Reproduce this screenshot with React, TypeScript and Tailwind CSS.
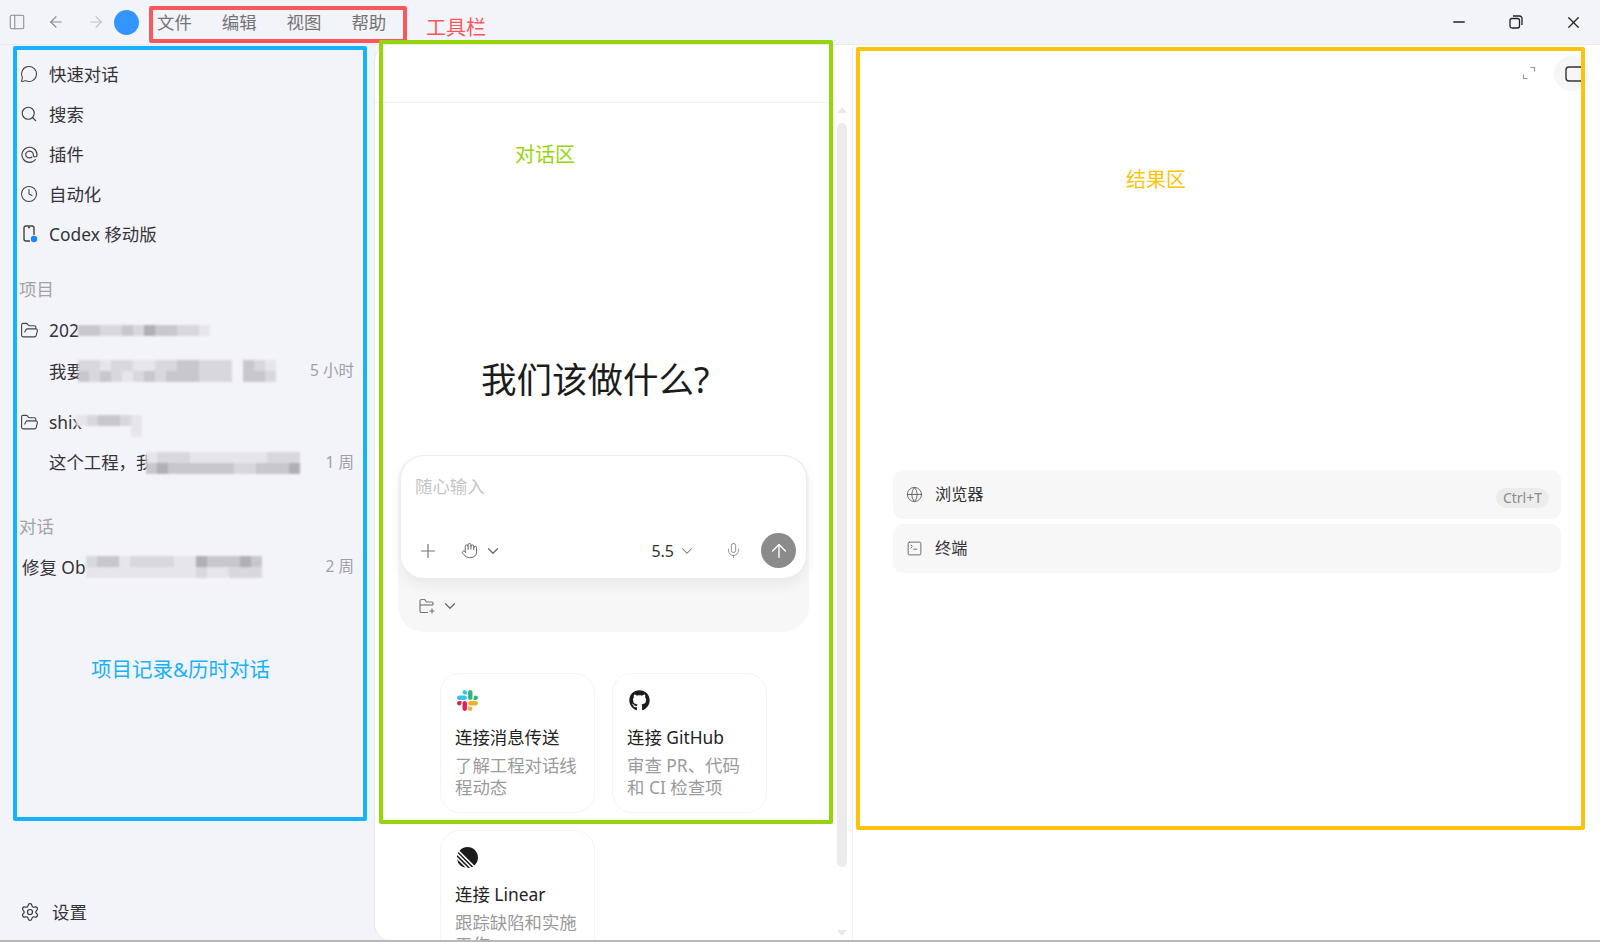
import { ReactNode } from "react";
import {
  ArrowLeft,
  ArrowRight,
  ArrowUp,
  ChevronDown,
  Clock,
  FolderOpen,
  Globe,
  Hand,
  MessageCircle,
  Mic,
  Minus,
  PanelLeft,
  Plus,
  Search,
  Settings,
  SquareTerminal,
  X,
} from "lucide-react";
import { FaGithub } from "react-icons/fa";
import { SiLinear } from "react-icons/si";

const tones = ["bg-transparent", "bg-[#e6e6ea]", "bg-[#d8d8dc]", "bg-[#c8c8cc]", "bg-[#b0b0b4]"];

// pixelated patch hiding a private title, one string per row of cells
function Blur({ rows, className }: { rows: string[]; className?: string }) {
  return (
    <div className={`flex flex-col blur-[1px] shrink-0 ${className ?? ""}`}>
      {rows.map((row, i) => (
        <div key={i} className="flex">
          {row.split("").map((c, j) => (
            <div key={j} className={`w-[11px] h-[11px] ${tones[Number(c)]}`} />
          ))}
        </div>
      ))}
    </div>
  );
}

function NavRow({ icon, label }: { icon: ReactNode; label: string }) {
  return (
    <div className="flex items-center h-[40px] pl-[19px] text-[#333338]">
      <div className="w-[20px] flex justify-center">{icon}</div>
      <span className="ml-[10px]">{label}</span>
    </div>
  );
}

function PhoneDot() {
  return (
    <svg width="20" height="20" viewBox="0 0 20 20" fill="none" stroke="#444" strokeWidth="1.4">
      <path d="M11 17H7a2 2 0 0 1-2-2V4a2 2 0 0 1 2-2h6a2 2 0 0 1 2 2v7" />
      <path d="M9 3.5h2" />
      <circle cx="15" cy="15" r="3.2" fill="#1a85ff" stroke="none" />
    </svg>
  );
}

function AtIcon() {
  return (
    <svg width="17" height="17" viewBox="0 0 18 18" fill="none" stroke="#444" strokeWidth="1.2">
      <path d="M15.5 14A8 8 0 1 1 17 9c0 1.6-.9 2.6-2 2.6S13 10.6 13 9a4 3.6 0 1 0-1 2.4" />
    </svg>
  );
}

function FolderAdd() {
  return (
    <svg width="18" height="18" viewBox="0 0 18 18" fill="none" stroke="#777" strokeWidth="1.2">
      <path d="M10 15.5H3.5A1.5 1.5 0 0 1 2 14V4a1.5 1.5 0 0 1 1.5-1.5h3.2L8.5 5h5A1.5 1.5 0 0 1 15 6.5v1.5" />
      <path d="M2 8h13" />
      <path d="M14 11.5v5M11.5 14h5" />
    </svg>
  );
}

function SlackLogo() {
  return (
    <svg width="21" height="21" viewBox="0 0 122.8 122.8" className="ml-[2px]">
      <path d="M25.8 77.6c0 7.1-5.8 12.9-12.9 12.9S0 84.7 0 77.6s5.8-12.9 12.9-12.9h12.9v12.9zm6.5 0c0-7.1 5.8-12.9 12.9-12.9s12.9 5.8 12.9 12.9v32.3c0 7.1-5.8 12.9-12.9 12.9s-12.9-5.8-12.9-12.9V77.6z" fill="#e01e5a" />
      <path d="M45.2 25.8c-7.1 0-12.9-5.8-12.9-12.9S38.1 0 45.2 0s12.9 5.8 12.9 12.9v12.9H45.2zm0 6.5c7.1 0 12.9 5.8 12.9 12.9s-5.8 12.9-12.9 12.9H12.9C5.8 58.1 0 52.3 0 45.2s5.8-12.9 12.9-12.9h32.3z" fill="#36c5f0" />
      <path d="M97 45.2c0-7.1 5.8-12.9 12.9-12.9s12.9 5.8 12.9 12.9-5.8 12.9-12.9 12.9H97V45.2zm-6.5 0c0 7.1-5.8 12.9-12.9 12.9s-12.9-5.8-12.9-12.9V12.9C64.7 5.8 70.5 0 77.6 0s12.9 5.8 12.9 12.9v32.3z" fill="#2eb67d" />
      <path d="M77.6 97c7.1 0 12.9 5.8 12.9 12.9s-5.8 12.9-12.9 12.9-12.9-5.8-12.9-12.9V97h12.9zm0-6.5c-7.1 0-12.9-5.8-12.9-12.9s5.8-12.9 12.9-12.9h32.3c7.1 0 12.9 5.8 12.9 12.9s-5.8 12.9-12.9 12.9H77.6z" fill="#ecb22e" />
    </svg>
  );
}

function ConnectCard({ icon, title, lines }: { icon: ReactNode; title: string; lines: string[] }) {
  return (
    <div className="w-[155px] h-[140px] rounded-[20px] border border-[#f4f4f4] pl-[14px] pt-[16px] shrink-0">
      <div className="h-[21px] flex">{icon}</div>
      <div className="mt-[15px] leading-[22px] text-[#222]">{title}</div>
      <div className="mt-[6px] leading-[22px] text-[#9b9b9b]">
        {lines.map((l) => (
          <div key={l}>{l}</div>
        ))}
      </div>
    </div>
  );
}

export default function App() {
  return (
    <div className="relative w-[1600px] h-[942px] overflow-hidden flex flex-col bg-[#f3f4f9] text-[17.4px] font-['Noto_Sans','Noto_Sans_CJK_SC',sans-serif]">
      {/* title bar */}
      <div className="h-[45px] flex items-center shrink-0 border-b border-[#e9e9ee]">
        <PanelLeft size={18} strokeWidth={1.4} color="#8a8a8e" className="ml-[8px]" />
        <ArrowLeft size={18} strokeWidth={1.5} color="#8c8c90" className="ml-[21px]" />
        <ArrowRight size={18} strokeWidth={1.5} color="#c4c4c8" className="ml-[22px]" />
        <div className="w-[25px] h-[25px] rounded-full bg-[#3395ff] ml-[9px]" />
        <div className="flex gap-[30px] ml-[18px] text-[#737376]">
          <span>文件</span>
          <span>编辑</span>
          <span>视图</span>
          <span>帮助</span>
        </div>
        <div className="ml-auto flex items-center">
          <Minus size={18} strokeWidth={1.8} color="#222" className="mr-[1px]" />
          <svg width="14" height="14" viewBox="0 0 14 14" fill="none" stroke="#222" strokeWidth="1.3" className="ml-[40px]">
            <rect x="1" y="3.5" width="9.5" height="9.5" rx="2" />
            <path d="M4 1h6.5A2.5 2.5 0 0 1 13 3.5V10" />
          </svg>
          <X size={19} strokeWidth={1.5} color="#222" className="ml-[41px] mr-[17px]" />
        </div>
      </div>

      <div className="flex flex-1 min-h-0">
        {/* sidebar */}
        <div className="w-[374px] shrink-0 flex flex-col pt-[9px] pb-[8px]">
          <NavRow icon={<MessageCircle size={18} strokeWidth={1.4} color="#444" />} label="快速对话" />
          <NavRow icon={<Search size={18} strokeWidth={1.5} color="#444" />} label="搜索" />
          <NavRow icon={<AtIcon />} label="插件" />
          <NavRow icon={<Clock size={18} strokeWidth={1.4} color="#444" />} label="自动化" />
          <NavRow icon={<PhoneDot />} label="Codex 移动版" />

          <div className="mt-[23px] h-[24px] leading-[24px] pl-[19px] text-[#a3a3a6]">项目</div>

          <div className="mt-[9px] h-[40px] flex items-center pl-[20px] text-[#333338]">
            <FolderOpen size={19} strokeWidth={1.4} color="#444" />
            <span className="ml-[10px]">202</span>
            <Blur rows={["332232433221"]} className="ml-[-1px]" />
          </div>
          <div className="mt-[1px] h-[40px] flex items-center pl-[49px] text-[#333338]">
            <span>我要</span>
            <Blur rows={["2212211223322203210", "3232123233322203320"]} className="ml-[-6px]" />
            <span className="ml-auto mr-[20px] text-[15.5px] text-[#a0a0a3]">5 小时</span>
          </div>
          <div className="mt-[11px] h-[40px] flex items-center pl-[20px] text-[#333338]">
            <FolderOpen size={19} strokeWidth={1.4} color="#444" />
            <span className="ml-[10px]">shix</span>
            <Blur rows={["123321", "000001"]} className="ml-[-6px] mt-[8px]" />
          </div>
          <div className="h-[40px] flex items-center pl-[49px] text-[#333338]">
            <span className="mt-[1px]">{"这个工程\uFF0C我"}</span>
            <Blur rows={["12221111111222", "34333333223334"]} className="ml-[-7px] mt-[1px]" />
            <span className="ml-auto mr-[20px] mt-[1px] text-[15.5px] text-[#a0a0a3]">1 周</span>
          </div>

          <div className="mt-[32px] h-[24px] leading-[24px] pl-[19px] text-[#a3a3a6]">对话</div>

          <div className="mt-[9px] h-[40px] flex items-center pl-[22px] text-[#333338]">
            <span>修复 Ob</span>
            <Blur rows={["2331222211433343", "1111111111211222"]} className="ml-0" />
            <span className="ml-auto mr-[20px] text-[15.5px] text-[#a0a0a3]">2 周</span>
          </div>

          <div className="mt-auto h-[40px] flex items-center pl-[20px] text-[#333338]">
            <Settings size={20} strokeWidth={1.4} color="#333" />
            <span className="ml-[12px]">设置</span>
          </div>
        </div>

        {/* conversation */}
        <div className="w-[478px] shrink-0 flex bg-white rounded-tl-[16px] rounded-bl-[16px] border-l border-[#e6e6ea]">
          <div className="w-[462px] shrink-0 overflow-hidden">
            <div className="h-[58px] border-b border-[#f0f0f0]" />
            <div className="mt-[252px] ml-[106px] h-[48px] leading-[48px] text-[35.5px] text-[#1c1c1c]">我们该做什么?</div>

            <div className="mt-[52px] ml-[23px] w-[411px] rounded-[26px] bg-[#f7f7f7]">
              <div className="mx-[2px] h-[124px] rounded-[24px] bg-white border border-[#ececec] shadow-[0_6px_14px_rgba(0,0,0,0.06)] flex flex-col pl-[14px] pr-[10px]">
                <div className="mt-[18px] text-[#c6c6c6] leading-[24px]">随心输入</div>
                <div className="mt-auto mb-[10px] flex items-center h-[35px]">
                  <Plus size={22} strokeWidth={1.3} color="#777" className="ml-[2px]" />
                  <Hand size={17} strokeWidth={1.4} color="#666" className="ml-[22px]" />
                  <ChevronDown size={18} strokeWidth={1.6} color="#666" className="ml-[6px]" />
                  <span className="ml-auto text-[#333] text-[16px]">5.5</span>
                  <ChevronDown size={18} strokeWidth={1.4} color="#777" className="ml-[4px]" />
                  <Mic size={17} strokeWidth={1.3} color="#888" className="ml-[29px]" />
                  <div className="ml-[19px] w-[35px] h-[35px] rounded-full bg-[#8b8b8b] flex items-center justify-center">
                    <ArrowUp size={22} strokeWidth={1.5} color="#fff" />
                  </div>
                </div>
              </div>
              <div className="h-[53px] flex items-center pl-[20px]">
                <FolderAdd />
                <ChevronDown size={18} strokeWidth={1.6} color="#666" className="ml-[5px]" />
              </div>
            </div>

            <div className="mt-[41px] ml-[65px] w-[330px] flex flex-wrap gap-[17px]">
              <ConnectCard icon={<SlackLogo />} title="连接消息传送" lines={["了解工程对话线", "程动态"]} />
              <ConnectCard icon={<FaGithub size={21} color="#1b1b1b" className="ml-[2px]" />} title="连接 GitHub" lines={["审查 PR、代码", "和 CI 检查项"]} />
              <ConnectCard icon={<SiLinear size={21} color="#1b1b1b" className="ml-[2px]" />} title="连接 Linear" lines={["跟踪缺陷和实施", "工作"]} />
            </div>
          </div>

          {/* scrollbar */}
          <div className="w-[15px] shrink-0 flex flex-col items-start pt-[62px]">
            <div className="w-0 h-0 border-x-[5px] border-x-transparent border-b-[6px] border-b-[#e8e8e8]" />
            <div className="mt-[10px] w-[10px] h-[744px] rounded-full bg-[#ececec]" />
            <div className="mt-auto mb-[4px] w-0 h-0 border-x-[5px] border-x-transparent border-t-[6px] border-t-[#e8e8e8]" />
          </div>
        </div>

        {/* results */}
        <div className="flex-1 bg-white border-l border-[#f0f0f0] flex flex-col">
          <div className="h-[425px] flex justify-end items-start pt-[11px] pr-[11px]">
            <svg width="14" height="14" viewBox="0 0 14 14" fill="none" stroke="#9a9a9a" strokeWidth="1.2" className="mt-[10px] mr-[18px]">
              <path d="M8.5 1.5h4v4M1.5 8.5v4h4" />
            </svg>
            <div className="w-[35px] h-[35px] rounded-full bg-[#f6f6f6] flex items-center justify-center">
              <svg width="18" height="18" viewBox="0 0 18 18" fill="none" stroke="#333" strokeWidth="1.4">
                <rect x="3" y="2" width="20" height="14" rx="3" />
              </svg>
            </div>
          </div>
          <div className="ml-[40px] mr-[39px] flex flex-col gap-[5px] text-[16.2px] text-[#333]">
            <div className="h-[49px] rounded-[10px] bg-[#f7f7f7] flex items-center pl-[13px] pr-[12px]">
              <Globe size={17} strokeWidth={1.2} color="#555" />
              <span className="ml-[12px]">浏览器</span>
              <span className="ml-auto mt-[6px] h-[20px] leading-[20px] px-[7px] rounded-full bg-[#ececec] text-[14px] text-[#8a8a8a]">Ctrl+T</span>
            </div>
            <div className="h-[49px] rounded-[10px] bg-[#f7f7f7] flex items-center pl-[13px]">
              <SquareTerminal size={17} strokeWidth={1.2} color="#555" />
              <span className="ml-[12px]">终端</span>
            </div>
          </div>
        </div>
      </div>

      <div className="h-[2px] shrink-0 bg-[#b8b8bc]" />

      {/* annotation boxes drawn over the screenshot */}
      <div className="absolute left-[149px] top-[6px] w-[258px] h-[37px] border-[4px] border-[#f9575c] rounded-[2px]" />
      <div className="absolute left-[13px] top-[46px] w-[354px] h-[775px] border-[4px] border-[#16b2ff] rounded-[2px]" />
      <div className="absolute left-[379px] top-[40px] w-[454px] h-[784px] border-[4px] border-[#96d40c] rounded-[2px]" />
      <div className="absolute left-[856px] top-[47px] w-[729px] h-[783px] border-[4px] border-[#fdc30b] rounded-[2px]" />
      <div className="absolute left-[426px] top-[14px] text-[20px] leading-[28px] text-[#f9575c]">工具栏</div>
      <div className="absolute left-[515px] top-[141px] text-[20px] leading-[28px] text-[#96d40c]">对话区</div>
      <div className="absolute left-[1126px] top-[166px] text-[20px] leading-[28px] text-[#fdc30b]">结果区</div>
      <div className="absolute left-[91px] top-[655px] text-[20.5px] leading-[28px] text-[#16b2ff]">项目记录&历时对话</div>
    </div>
  );
}
